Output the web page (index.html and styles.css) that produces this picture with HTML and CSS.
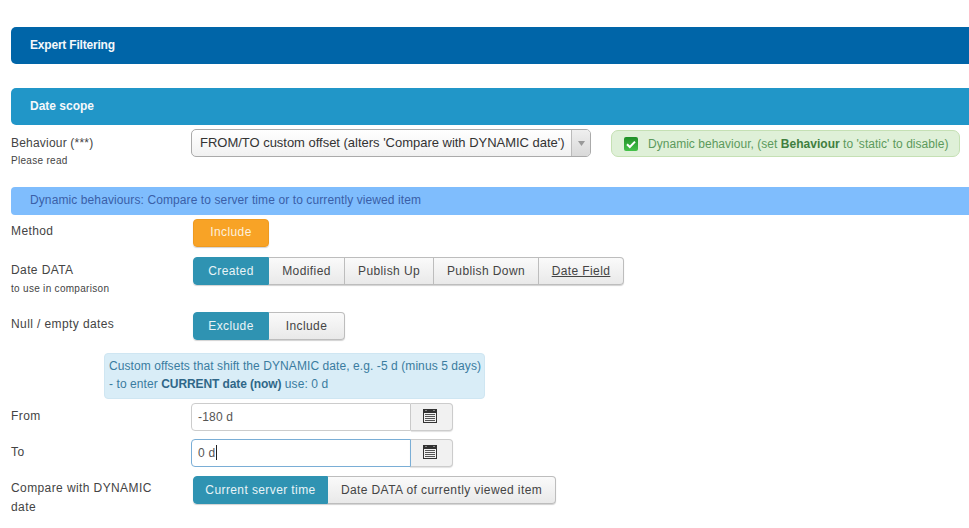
FILE: index.html
```html
<!DOCTYPE html>
<html lang="en">
<head>
<meta charset="utf-8">
<title>Expert Filtering</title>
<link rel="stylesheet" href="styles.css">
</head>
<body>
<main class="page">
  <h2 class="bar bar-dark">Expert Filtering</h2>
  <h3 class="bar bar-mid">Date scope</h3>

  <div class="row row-behaviour">
    <div class="label">Behaviour (***)<small>Please read</small></div>
    <div class="select">
      <span class="select-text">FROM/TO custom offset (alters 'Compare with DYNAMIC date')</span>
      <span class="select-arrow"><svg width="7" height="5" viewBox="0 0 7 5"><path d="M0 0h7L3.500 5z" fill="#999"/></svg></span>
    </div>
    <div class="alert-ok">
      <svg class="check" width="14" height="14" viewBox="0 0 14 14"><defs><linearGradient id="gloss" x1="0" y1="0" x2="0" y2="1"><stop offset="0" stop-color="#1f8f28"/><stop offset="1" stop-color="#45c24a"/></linearGradient></defs><rect width="14" height="14" rx="2" fill="url(#gloss)"/><path d="M3 7.200l2.800 2.800L11 4.600" fill="none" stroke="#fff" stroke-width="2"/></svg>
      <span>Dynamic behaviour, (set <b>Behaviour</b> to 'static' to disable)</span>
    </div>
  </div>

  <div class="bar-info">Dynamic behaviours: Compare to server time or to currently viewed item</div>

  <div class="row row-method">
    <div class="label">Method</div>
    <div class="btn-group"><span class="btn btn-orange">Include</span></div>
  </div>

  <div class="row row-data">
    <div class="label">Date DATA<small>to use in comparison</small></div>
    <div class="btn-group">
      <span class="btn btn-on w76">Created</span>
      <span class="btn w76">Modified</span>
      <span class="btn w89">Publish Up</span>
      <span class="btn w105">Publish Down</span>
      <span class="btn w85 underline">Date Field</span>
    </div>
  </div>

  <div class="row row-null">
    <div class="label">Null / empty dates</div>
    <div class="btn-group">
      <span class="btn btn-on w76">Exclude</span>
      <span class="btn w76">Include</span>
    </div>
  </div>

  <div class="note">Custom offsets that shift the DYNAMIC date, e.g. -5 d (minus 5 days)<br>- to enter <b>CURRENT date (now)</b> use: 0 d</div>

  <div class="row row-from">
    <div class="label">From</div>
    <div class="input-group">
      <span class="input">-180 d</span>
      <span class="cal"><svg width="14" height="14" viewBox="0 0 14 14"><path d="M0 0h14v14H0z" fill="#333"/><path d="M2 1h2v1H2zM10 1h2v1h-2z" fill="#888"/><path d="M1 4h12v9H1z" fill="#f2f2f2"/><path d="M2 5h10v1H2zM2 7h10v1H2zM2 9h10v1H2zM2 11h10v1H2z" fill="#555"/></svg></span>
    </div>
  </div>

  <div class="row row-to">
    <div class="label">To</div>
    <div class="input-group focus">
      <span class="input">0 d<i class="caret"></i></span>
      <span class="cal"><svg width="14" height="14" viewBox="0 0 14 14"><path d="M0 0h14v14H0z" fill="#333"/><path d="M2 1h2v1H2zM10 1h2v1h-2z" fill="#888"/><path d="M1 4h12v9H1z" fill="#f2f2f2"/><path d="M2 5h10v1H2zM2 7h10v1H2zM2 9h10v1H2zM2 11h10v1H2z" fill="#555"/></svg></span>
    </div>
  </div>

  <div class="row row-compare">
    <div class="label label-wrap">Compare with DYNAMIC date</div>
    <div class="btn-group">
      <span class="btn btn-on w135">Current server time</span>
      <span class="btn w228">Date DATA of currently viewed item</span>
    </div>
  </div>
</main>
</body>
</html>
```
FILE: styles.css
```css
* { box-sizing: border-box; }
html, body { margin: 0; height: 528px; overflow: hidden; background: #fff; }
body { font: 12px/18px "Liberation Sans", Arial, sans-serif; color: #444; }
.page { padding: 27px 0 0 11px; width: 990px; }

.bar { margin: 0; height: 37px; padding: 0 19px; border-radius: 5px; color: #f4f8fb; font-size: 12px; font-weight: bold; line-height: 36px; }
.bar-dark { background: #0065a8; margin-bottom: 24px; letter-spacing: -.2px; }
.bar-mid { background: #2196c8; }
.bar-info { height: 28px; padding: 0 19px; background: #7fbdfd; border-radius: 4px; color: #3a5fa8; line-height: 27px; letter-spacing: .1px; }

.row { display: flex; align-items: flex-start; }
.label { width: 182px; flex: none; line-height: 18px; letter-spacing: .4px; }
.label small { display: block; font-size: 10px; line-height: 18px; letter-spacing: .3px; }
.label-wrap { width: 150px; margin-right: 32px; line-height: 19px; }

.row-behaviour { height: 62px; padding-top: 4px; }
.row-behaviour .label { width: 180px; padding-top: 5px; letter-spacing: .2px; }
.row-method { height: 42px; padding-top: 4px; }
.row-data { height: 55px; }
.row-null { height: 41px; }
.row-from { height: 36px; }
.row-to { height: 37px; }
.row-method .label { padding-top: 3px; }
.row-data .label { padding-top: 4px; }
.row-data .label small { line-height: 19px; }
.row-null .label { padding-top: 3px; }
.row-from .label, .row-to .label { padding-top: 4px; width: 180px; }
.row-compare .label { padding-top: 3px; }

.select { width: 400px; height: 28px; display: flex; background: linear-gradient(#fff, #f1f1f1); border: 1px solid #aaa; border-radius: 5px; color: #333; font-size: 13px; line-height: 26px; }
.select-text { flex: 1; padding-left: 8px; white-space: nowrap; letter-spacing: -.02px; }
.select-arrow { width: 19px; flex: none; display: flex; align-items: center; justify-content: center; border-left: 1px solid #bbb; background: linear-gradient(#efefef, #d9d9d9); border-radius: 0 4px 4px 0; }

.alert-ok { margin: 1px 0 0 20px; width: 349px; height: 27px; display: flex; align-items: center; gap: 10px; padding-left: 12px; background: #dff0d8; border: 1px solid #c5e0b4; border-radius: 7px; color: #5c9a5c; white-space: nowrap; letter-spacing: .03px; }
.alert-ok b { color: #3f7f3f; }
.check { flex: none; }

.btn-group { display: flex; height: 28px; border-radius: 4px; box-shadow: 0 1px 1px rgba(0,0,0,.18); }
.btn { height: 28px; display: block; text-align: center; background: linear-gradient(#fafafa, #e9e9e9); border: 1px solid #bdbdbd; border-left-width: 0; color: #444; line-height: 26px; letter-spacing: .4px; white-space: nowrap; }
.btn:first-child { border-radius: 4px 0 0 4px; border-left-width: 1px; }
.btn:last-child { border-radius: 0 4px 4px 0; }
.btn:first-child:last-child { border-radius: 4px; }
.btn-on { background: #2f93b2; border-color: #2f93b2; color: #e9f4f7; }
.btn-orange { width: 76px; background: #f8a326; border-color: #ee9a20; color: #fdf0dc; line-height: 25px; }
.w76 { width: 76px; } .w85 { width: 85px; } .w89 { width: 89px; } .w105 { width: 105px; } .w135 { width: 135px; } .w228 { width: 228px; }
.underline { text-decoration: underline; }

.note { width: 381px; height: 46px; margin: 0 0 4px 93px; padding: 3px 4px; background: #d9edf7; border: 1px solid #cfe6f2; border-radius: 4px; color: #3a7ca0; line-height: 18px; white-space: nowrap; letter-spacing: .08px; }
.note b { color: #2f6788; letter-spacing: -.1px; }

.input-group { display: flex; width: 262px; height: 28px; }
.input { width: 220px; height: 28px; padding-left: 6px; background: #fff; border: 1px solid #ccc; border-radius: 4px 0 0 4px; line-height: 26px; color: #555; letter-spacing: .2px; }
.cal { width: 42px; height: 28px; display: flex; align-items: center; justify-content: center; padding: 0 4px 3px 0; background: #f1f1f1; border: 1px solid #ccc; border-left-width: 0; border-radius: 0 4px 4px 0; box-shadow: 0 1px 1px rgba(0,0,0,.12); }
.focus .input { border-color: #7aaed6; }
.focus .cal { border-left: 1px solid #7aaed6; margin-left: -1px; width: 43px; }
.caret { display: inline-block; width: 1px; height: 15px; margin-left: 1px; background: #222; vertical-align: -3px; }
```
